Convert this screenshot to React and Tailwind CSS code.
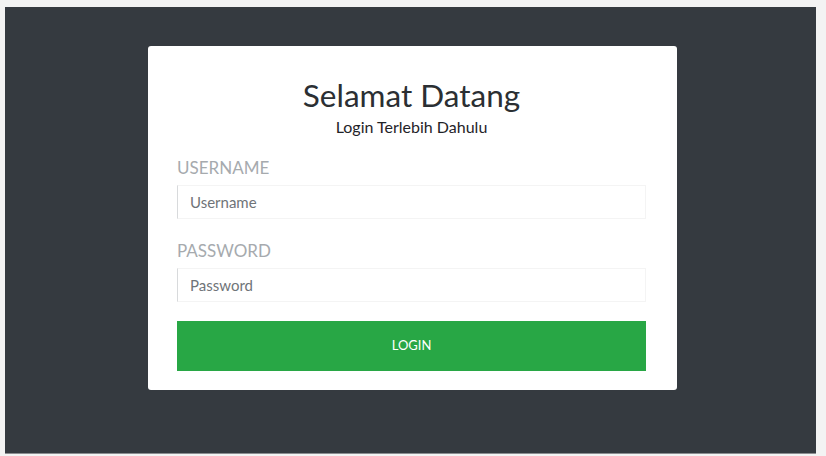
import React, { useState } from 'react';

const LoginPage = () => {
  const [form, setForm] = useState({ username: '', password: '' });

  const onChange = (e) => {
    setForm((prev) => ({ ...prev, [e.target.name]: e.target.value }));
  };

  const onSubmit = (e) => {
    e.preventDefault();
  };

  return (
    <div className="w-[826px] h-[456px] bg-[#f3f3f3] pt-[7px] pl-[5px] font-['Lato',sans-serif]">
      <div className="w-[811px] h-[447px] bg-[#353a40] border-b border-[#8a8d90] pt-[39px] pl-[143px]">
        {/* Login card */}
        <div className="w-[529px] h-[344px] bg-white rounded-[3px] pl-[29px] pr-[31px] pt-[31px]">
          <div className="text-center">
            <h1 className="text-[31.5px] leading-[36px] text-[#2b2f33]">Selamat Datang</h1>
            <p className="text-[16px] leading-[20px] text-[#1f2328] mt-[4px]">Login Terlebih Dahulu</p>
          </div>

          <form onSubmit={onSubmit} className="mt-[21px]">
            <label className="block text-[17px] leading-[20px] text-[#a6aaae] uppercase">
              Username
            </label>
            <input
              name="username"
              value={form.username}
              onChange={onChange}
              placeholder="Username"
              className="mt-[7px] block w-full h-[34px] border border-[#f4f4f4] border-l-[#d8dadc] px-[12px] text-[15px] text-[#555] placeholder:text-[#6f7478] focus:outline-none"
            />

            <label className="block mt-[22px] text-[17px] leading-[20px] text-[#a6aaae] uppercase">
              Password
            </label>
            <input
              type="password"
              name="password"
              value={form.password}
              onChange={onChange}
              placeholder="Password"
              className="mt-[7px] block w-full h-[34px] border border-[#f4f4f4] border-l-[#d8dadc] px-[12px] text-[15px] text-[#555] placeholder:text-[#6f7478] focus:outline-none"
            />

            <button
              type="submit"
              className="mt-[19px] block w-full h-[50px] bg-[#28a745] text-white text-[13px] uppercase"
            >
              Login
            </button>
          </form>
        </div>
      </div>
    </div>
  );
};

export default function App() {
  return <LoginPage />;
}
